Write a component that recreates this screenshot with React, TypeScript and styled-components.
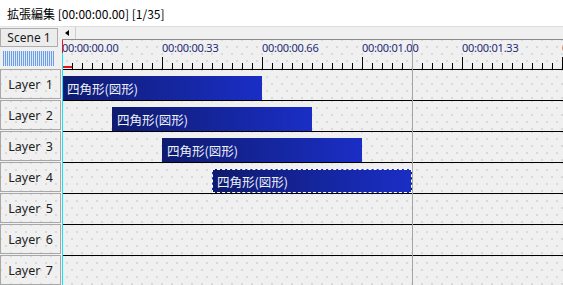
import React from "react"
import styled, { createGlobalStyle, css } from "styled-components"

const FRAME = 10
const SCENE_END = 35

const layers = [1, 2, 3, 4, 5, 6, 7]

const clips = [
  { layer: 1, start: 0, length: 20, name: "四角形(図形)" },
  { layer: 2, start: 5, length: 20, name: "四角形(図形)" },
  { layer: 3, start: 10, length: 20, name: "四角形(図形)" },
  { layer: 4, start: 15, length: 20, name: "四角形(図形)", selected: true },
]

const marks = [
  "00:00:00.00",
  "00:00:00.33",
  "00:00:00.66",
  "00:00:01.00",
  "00:00:01.33",
  "00:00:01.66",
]

const GlobalStyle = createGlobalStyle`
  html, body {
    margin: 0;
    padding: 0;
    background: #f0f0f0;
    overflow: hidden;
  }
`

const dots = css`
  background-color: #f0f0f0;
  background-image: radial-gradient(#d9d9d9 0.6px, transparent 0.9px),
    radial-gradient(#d9d9d9 0.6px, transparent 0.9px);
  background-size: 10px 14px;
  background-position: 0 0, 5px 7px;
`

const Window = styled.div`
  width: 563px;
  height: 285px;
  display: flex;
  flex-direction: column;
  overflow: hidden;
  background: #f0f0f0;
  font-family: "Noto Sans", "Noto Sans CJK JP", sans-serif;
  color: #1a1a1a;
`

const TitleBar = styled.div`
  height: 26px;
  flex-shrink: 0;
  display: flex;
  align-items: center;
  padding-left: 7px;
  background: #ffffff;
  border-bottom: 1px solid #e4e4e4;
  font-family: "Noto Sans CJK JP", sans-serif;
  font-size: 12px;
  color: #000;
`

const Body = styled.div`
  flex: 1;
  display: flex;
  min-height: 0;
`

const Sidebar = styled.div`
  width: 62px;
  flex-shrink: 0;
  display: flex;
  flex-direction: column;
`

const SceneBlock = styled.div`
  height: 42px;
  flex-shrink: 0;
  display: flex;
  flex-direction: column;
  padding-top: 1px;
  box-sizing: border-box;
`

const SceneButton = styled.div`
  width: 58px;
  height: 19px;
  box-sizing: border-box;
  border: 1px solid #adadad;
  background: #ececec;
  display: flex;
  align-items: center;
  justify-content: center;
  font-size: 12px;
`

const HeightGrip = styled.div`
  margin: 4px 0 0 3px;
  width: 51px;
  height: 15px;
  background: repeating-linear-gradient(
    90deg,
    #6e9ee6 0 1px,
    #dfe8f6 1px 2px
  );
`

const LayerHeader = styled.div`
  ${dots};
  width: 61px;
  height: 30px;
  margin-bottom: 1px;
  flex-shrink: 0;
  box-sizing: border-box;
  border: 1px solid #a8a8a8;
  display: flex;
  align-items: center;
  justify-content: center;
  font-size: 12.5px;
  word-spacing: 2px;
  color: #1e1e1e;
`

const Timeline = styled.div`
  flex: 1;
  position: relative;
  display: flex;
  flex-direction: column;
  min-width: 0;
`

const Scrollbar = styled.div`
  height: 12px;
  flex-shrink: 0;
  display: flex;
  background: #f0f0f0;
  border-top: 1px solid #dcdcdc;
  border-bottom: 1px solid #8c8c8c;
  box-sizing: content-box;
  margin-top: -1px;
`

const ArrowButton = styled.div`
  width: 14px;
  display: flex;
  align-items: center;
  justify-content: center;
  border-right: 1px solid #cdcdcd;
  padding-right: 4px;
  box-sizing: border-box;
`

const LeftTriangle = styled.div`
  width: 0;
  height: 0;
  border-top: 3.5px solid transparent;
  border-bottom: 3.5px solid transparent;
  border-right: 4px solid #000;
`

const Ruler = styled.div`
  ${dots};
  height: 30px;
  flex-shrink: 0;
  position: relative;
  box-sizing: border-box;
  border-bottom: 1px solid #000;
`

const TimeLabel = styled.span`
  position: absolute;
  top: 1px;
  font-family: "Noto Sans", sans-serif;
  font-size: 11px;
  letter-spacing: -0.25px;
  line-height: 13px;
  white-space: nowrap;
  color: #1e2c74;
`

const Ticks = styled.svg`
  position: absolute;
  left: 0;
  bottom: 0;
`

const StartMarker = styled.div`
  position: absolute;
  left: 0;
  bottom: 1px;
  width: 10px;
  height: 2px;
  background: #e8141c;
`

const LayerRow = styled.div`
  ${dots};
  height: 31px;
  flex-shrink: 0;
  position: relative;
  box-sizing: border-box;
  border-bottom: 1px solid #000;
`

const Clip = styled.div<{ $selected?: boolean }>`
  position: absolute;
  top: 6px;
  height: 24px;
  box-sizing: border-box;
  padding-left: 5px;
  display: flex;
  align-items: center;
  background: linear-gradient(90deg, #0f1b6e 0%, #1a2ec6 100%);
  color: #eef0fa;
  font-family: "Noto Sans CJK JP", sans-serif;
  font-size: 12.5px;
  white-space: nowrap;
  overflow: hidden;
  ${(p) =>
    p.$selected &&
    css`
      border: 1px dashed #ffffff;
      padding-left: 4px;
    `}
`

const Cursor = styled.div`
  position: absolute;
  left: 0;
  top: 13px;
  bottom: 0;
  width: 1px;
  background: linear-gradient(180deg, #e8141c 0 13px, #14e4f0 13px);
  pointer-events: none;
`

const SceneEnd = styled.div`
  position: absolute;
  top: 13px;
  bottom: 0;
  width: 1px;
  background: #a4a4a4;
  pointer-events: none;
`

const RulerTicks = () => {
  const lines = []
  for (let i = 1; i <= 50; i++) {
    const x = i * FRAME + 0.5
    const major = i % 10 === 0
    lines.push(
      <line key={i} x1={x} x2={x} y1={major ? 17 : 23} y2={29} stroke="#000" strokeWidth={1} />
    )
  }
  return (
    <Ticks width={502} height={29} viewBox="0 0 502 29">
      {lines}
    </Ticks>
  )
}

export default function App() {
  return (
    <>
      <GlobalStyle />
      <Window>
        <TitleBar>拡張編集 [00:00:00.00] [1/35]</TitleBar>
        <Body>
          <Sidebar>
            <SceneBlock>
              <SceneButton>Scene 1</SceneButton>
              <HeightGrip />
            </SceneBlock>
            {layers.map((n) => (
              <LayerHeader key={n}>Layer {n}</LayerHeader>
            ))}
          </Sidebar>
          <Timeline>
            <Scrollbar>
              <ArrowButton>
                <LeftTriangle />
              </ArrowButton>
            </Scrollbar>
            <Ruler>
              {marks.map((m, i) => (
                <TimeLabel key={m} style={{ left: i * 10 * FRAME }}>
                  {m}
                </TimeLabel>
              ))}
              <RulerTicks />
              <StartMarker />
            </Ruler>
            {layers.map((n) => (
              <LayerRow key={n}>
                {clips
                  .filter((c) => c.layer === n)
                  .map((c) => (
                    <Clip
                      key={c.start}
                      $selected={c.selected}
                      style={{ left: c.start * FRAME, width: c.length * FRAME }}
                    >
                      {c.name}
                    </Clip>
                  ))}
              </LayerRow>
            ))}
            <SceneEnd style={{ left: SCENE_END * FRAME }} />
            <Cursor />
          </Timeline>
        </Body>
      </Window>
    </>
  )
}
